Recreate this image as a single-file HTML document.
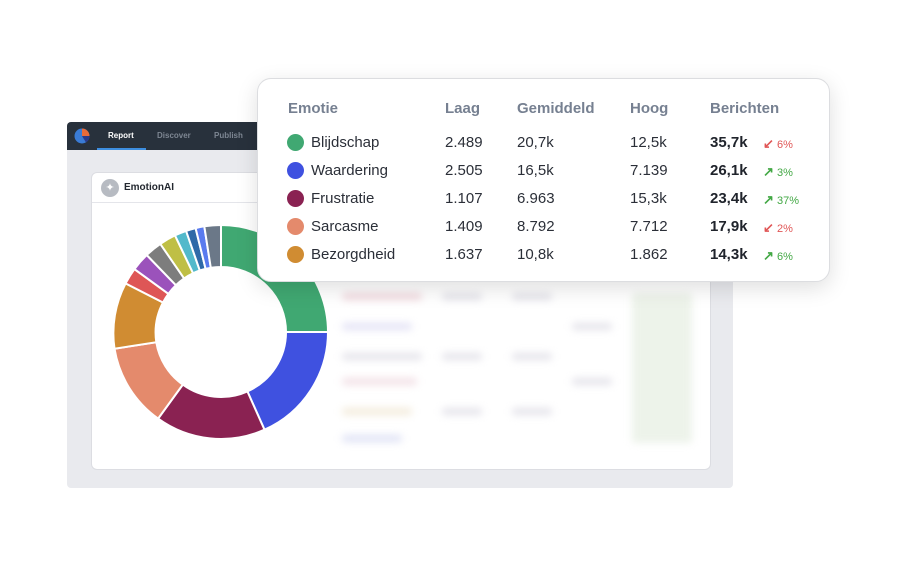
<!DOCTYPE html>
<html><head><style>
body{margin:0;width:897px;height:562px;background:#fff;position:relative;overflow:hidden;font-family:"Liberation Sans",sans-serif}
.back{position:absolute;left:67px;top:122px;width:666px;height:366px;background:#e9eaee;border-radius:4px;overflow:hidden}
.nav{position:absolute;left:0;top:0;width:100%;height:28px;background:#28313c}
.nav span{position:absolute;top:9px;font-size:8px;font-weight:bold;color:#7d8692}
.card{position:absolute;left:24px;top:50px;width:618px;height:296px;background:#fff;border:1px solid #dcdde2;border-radius:6px;overflow:hidden}
.front{position:absolute;left:257px;top:78px;width:571px;height:202px;background:#fff;border:1.5px solid #dcdde0;border-radius:14px;box-shadow:0 6px 22px rgba(0,0,0,.13)}
.h{position:absolute;top:21px;font-size:15px;font-weight:bold;color:#768091}
.r{position:absolute;font-size:15px;color:#2b2f38}
.dot{position:absolute;width:17px;height:17px;border-radius:50%}
.b{font-weight:bold;color:#20242c}
.pc{position:absolute;font-size:11px}
.up{color:#43a845}.dn{color:#e05656}
.pc b{font-size:13px}
.blur div{position:absolute;height:7px;background:#e4e3ea;border-radius:3px}
</style></head><body>
<div class="back">
 <div class="nav">
  <svg style="position:absolute;left:7px;top:6px" width="16" height="16" viewBox="0 0 16 16"><circle cx="8" cy="8" r="7.5" fill="#3a7bd5"/><path d="M8 8V0.5A7.5 7.5 0 0 1 15.5 8Z" fill="#e86b3a"/><path d="M8 8H15.5A7.5 7.5 0 0 1 12 14.5Z" fill="#2a3a8a"/></svg>
  <span style="left:41px;color:#fff">Report</span>
  <span style="left:90px">Discover</span>
  <span style="left:147px">Publish</span>
  <div style="position:absolute;left:30px;top:26px;width:49px;height:2px;background:#3d8ee0"></div>
 </div>
 <div class="card">
  <div style="position:absolute;left:0;top:29px;width:100%;height:1px;background:#e4e5ea"></div>
  <div style="position:absolute;left:9px;top:6px;width:18px;height:18px;border-radius:50%;background:#b7bbc2;color:#fff;font-size:11px;text-align:center;line-height:18px">✦</div>
  <div style="position:absolute;left:32px;top:9px;font-size:10px;font-weight:bold;color:#232830">EmotionAI</div>
  <div class="blur" style="filter:blur(4px)">
   <div style="left:250px;top:120px;width:80px;background:#f1d9df"></div>
   <div style="left:250px;top:150px;width:70px;background:#e3e2f5"></div>
   <div style="left:250px;top:180px;width:80px"></div>
   <div style="left:250px;top:205px;width:75px;background:#f2e0e6"></div>
   <div style="left:250px;top:235px;width:70px;background:#f3ebdb"></div>
   <div style="left:250px;top:262px;width:60px;background:#dfe2f5"></div>
   <div style="left:350px;top:120px;width:40px"></div><div style="left:350px;top:180px;width:40px"></div><div style="left:350px;top:235px;width:40px"></div>
   <div style="left:420px;top:120px;width:40px"></div><div style="left:420px;top:180px;width:40px"></div><div style="left:420px;top:235px;width:40px"></div>
   <div style="left:480px;top:150px;width:40px"></div><div style="left:480px;top:205px;width:40px"></div>
   <div style="left:540px;top:120px;width:60px;height:150px;background:#edf3ea"></div>
  </div>
 </div>
</div>
<svg style="position:absolute;left:0;top:0" width="897" height="562">
<g stroke="#fff" stroke-width="2">
<path fill="#40a872" d="M221.0,225.0A107,107 0 0,1 328.0,332.0L286.0,332.0A65,65 0 0,0 221.0,267.0Z"/>
<path fill="#3f51e0" d="M328.0,332.0A107,107 0 0,1 264.5,429.7L247.4,391.4A65,65 0 0,0 286.0,332.0Z"/>
<path fill="#8a2252" d="M264.5,429.7A107,107 0 0,1 158.1,418.6L182.8,384.6A65,65 0 0,0 247.4,391.4Z"/>
<path fill="#e48a6c" d="M158.1,418.6A107,107 0 0,1 114.5,348.7L156.3,342.2A65,65 0 0,0 182.8,384.6Z"/>
<path fill="#d08c32" d="M114.5,348.7A107,107 0 0,1 125.6,283.4L163.0,302.5A65,65 0 0,0 156.3,342.2Z"/>
<path fill="#de5656" d="M125.6,283.4A107,107 0 0,1 134.4,269.1L168.4,293.8A65,65 0 0,0 163.0,302.5Z"/>
<path fill="#9b52bb" d="M134.4,269.1A107,107 0 0,1 146.7,255.0L175.9,285.2A65,65 0 0,0 168.4,293.8Z"/>
<path fill="#7d7d7d" d="M146.7,255.0A107,107 0 0,1 160.3,243.9L184.1,278.4A65,65 0 0,0 175.9,285.2Z"/>
<path fill="#bfbf45" d="M160.3,243.9A107,107 0 0,1 175.0,235.4L193.1,273.3A65,65 0 0,0 184.1,278.4Z"/>
<path fill="#52b9cb" d="M175.0,235.4A107,107 0 0,1 186.1,230.9L199.8,270.5A65,65 0 0,0 193.1,273.3Z"/>
<path fill="#2f6aa8" d="M186.1,230.9A107,107 0 0,1 195.6,228.1L205.6,268.9A65,65 0 0,0 199.8,270.5Z"/>
<path fill="#5a7bef" d="M195.6,228.1A107,107 0 0,1 204.3,226.3L210.8,267.8A65,65 0 0,0 205.6,268.9Z"/>
<path fill="#6b7888" d="M204.3,226.3A107,107 0 0,1 221.0,225.0L221.0,267.0A65,65 0 0,0 210.8,267.8Z"/>
</g></svg>
<div class="front">
 <div class="h" style="left:30px">Emotie</div>
 <div class="h" style="left:187px">Laag</div>
 <div class="h" style="left:259px">Gemiddeld</div>
 <div class="h" style="left:372px">Hoog</div>
 <div class="h" style="left:452px">Berichten</div>
 <div class="dot" style="left:29px;top:55px;background:#40a872"></div>
 <div class="r" style="left:53px;top:55px">Blijdschap</div><div class="r" style="left:187px;top:55px">2.489</div><div class="r" style="left:259px;top:55px">20,7k</div><div class="r" style="left:372px;top:55px">12,5k</div><div class="r b" style="left:452px;top:55px">35,7k</div><div class="pc dn" style="left:505px;top:57px"><b>↙</b> 6%</div>
 <div class="dot" style="left:29px;top:83px;background:#3f51e0"></div>
 <div class="r" style="left:53px;top:83px">Waardering</div><div class="r" style="left:187px;top:83px">2.505</div><div class="r" style="left:259px;top:83px">16,5k</div><div class="r" style="left:372px;top:83px">7.139</div><div class="r b" style="left:452px;top:83px">26,1k</div><div class="pc up" style="left:505px;top:85px"><b>↗</b> 3%</div>
 <div class="dot" style="left:29px;top:111px;background:#8a2252"></div>
 <div class="r" style="left:53px;top:111px">Frustratie</div><div class="r" style="left:187px;top:111px">1.107</div><div class="r" style="left:259px;top:111px">6.963</div><div class="r" style="left:372px;top:111px">15,3k</div><div class="r b" style="left:452px;top:111px">23,4k</div><div class="pc up" style="left:505px;top:113px"><b>↗</b> 37%</div>
 <div class="dot" style="left:29px;top:139px;background:#e48a6c"></div>
 <div class="r" style="left:53px;top:139px">Sarcasme</div><div class="r" style="left:187px;top:139px">1.409</div><div class="r" style="left:259px;top:139px">8.792</div><div class="r" style="left:372px;top:139px">7.712</div><div class="r b" style="left:452px;top:139px">17,9k</div><div class="pc dn" style="left:505px;top:141px"><b>↙</b> 2%</div>
 <div class="dot" style="left:29px;top:167px;background:#d08c32"></div>
 <div class="r" style="left:53px;top:167px">Bezorgdheid</div><div class="r" style="left:187px;top:167px">1.637</div><div class="r" style="left:259px;top:167px">10,8k</div><div class="r" style="left:372px;top:167px">1.862</div><div class="r b" style="left:452px;top:167px">14,3k</div><div class="pc up" style="left:505px;top:169px"><b>↗</b> 6%</div>
</div>
</body></html>
